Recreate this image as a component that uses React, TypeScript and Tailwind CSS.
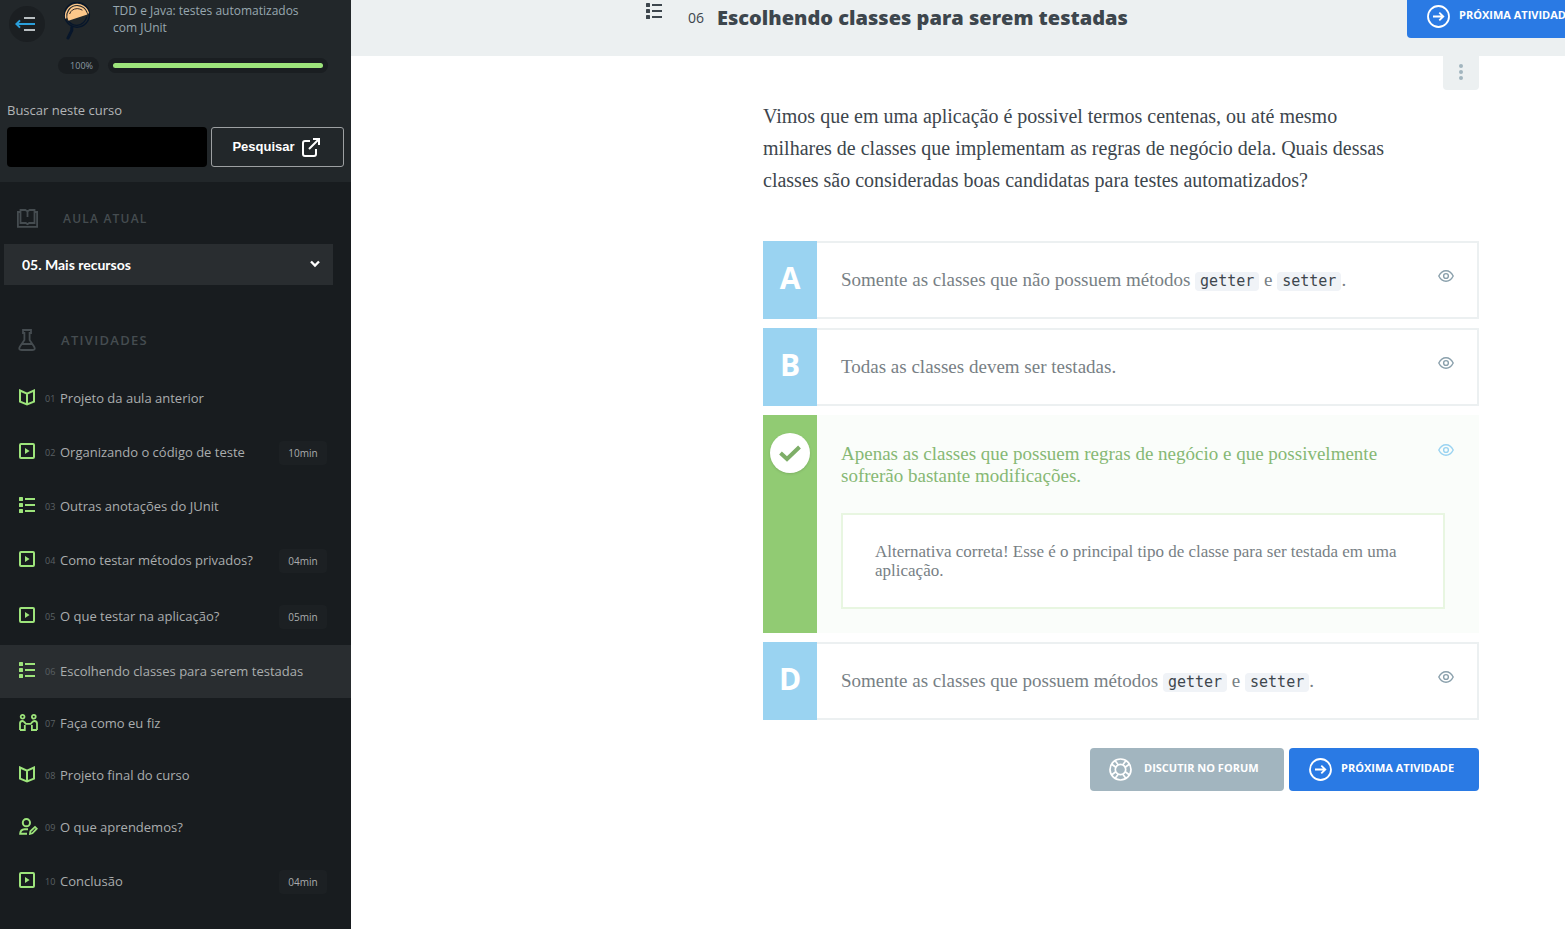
import { useState } from 'react'

type Kind = 'book' | 'video' | 'list' | 'pair' | 'review'

interface Activity {
  n: string
  title: string
  kind: Kind
  time?: string
}

const ACTIVITIES: Activity[] = [
  { n: '01', title: 'Projeto da aula anterior', kind: 'book' },
  { n: '02', title: 'Organizando o código de teste', kind: 'video', time: '10min' },
  { n: '03', title: 'Outras anotações do JUnit', kind: 'list' },
  { n: '04', title: 'Como testar métodos privados?', kind: 'video', time: '04min' },
  { n: '05', title: 'O que testar na aplicação?', kind: 'video', time: '05min' },
  { n: '06', title: 'Escolhendo classes para serem testadas', kind: 'list' },
  { n: '07', title: 'Faça como eu fiz', kind: 'pair' },
  { n: '08', title: 'Projeto final do curso', kind: 'book' },
  { n: '09', title: 'O que aprendemos?', kind: 'review' },
  { n: '10', title: 'Conclusão', kind: 'video', time: '04min' },
]

const CURRENT = '06'

function rowStyle(a: Activity) {
  if (a.n === CURRENT) return 'h-[53px] bg-[#292d30]'
  return a.time ? 'h-14' : 'h-[52px]'
}

function ListIcon() {
  return (
    <svg width="16" height="16" viewBox="0 0 16 16" fill="currentColor">
      <rect x="0" y="0" width="4" height="4" rx="0.6" />
      <rect x="0" y="6" width="4" height="4" rx="0.6" />
      <rect x="0" y="12" width="4" height="4" rx="0.6" />
      <path d="M6 1h10v2H6zM6 7h10v2H6zM6 13h10v2H6z" />
    </svg>
  )
}

const KIND_ICON: Record<Kind, React.ReactNode> = {
  book: (
    <svg width="16" height="17" viewBox="0 0 16 17" fill="none" stroke="currentColor" strokeWidth="2">
      <path d="M1 1.5 8 4.6 15 1.5V12.6L8 15.5 1 12.6ZM8 4.6V15.5" />
    </svg>
  ),
  video: (
    <svg width="16" height="16" viewBox="0 0 16 16">
      <rect x="1" y="1" width="14" height="14" rx="1" fill="none" stroke="currentColor" strokeWidth="2" />
      <path d="M6 5v6l4.6-3z" fill="currentColor" />
    </svg>
  ),
  list: <ListIcon />,
  pair: (
    <svg width="19" height="17" viewBox="0 0 19 17" fill="none" stroke="currentColor" strokeWidth="1.8">
      <circle cx="3.6" cy="2.8" r="1.9" />
      <circle cx="14.8" cy="2.8" r="1.9" />
      <path d="M1 16V9.6Q1 7 3.4 7 4.6 7 5.4 8.2L6.8 9.8H9.3M1 16H5.8V11M18 16V9.6Q18 7 15.4 7 14.2 7 13.2 8.2L11.8 9.8H9.3M18 16H12.9V11" />
    </svg>
  ),
  review: (
    <svg width="19" height="17" viewBox="0 0 19 17" fill="none" stroke="currentColor" strokeWidth="2">
      <circle cx="7.4" cy="4.7" r="3.6" />
      <path d="M9 11.2H5.6Q1.4 11.4 1.2 15.7H8" />
      <path d="M11 15.9 11.4 13.3 16 8.9 17.8 10.7 13.4 15.3Z" strokeWidth="1.8" />
    </svg>
  ),
}

function EyeIcon() {
  return (
    <svg width="16" height="12" viewBox="0 0 16 12" fill="none" stroke="currentColor" strokeWidth="1.4">
      <path d="M.8 6Q3.4.8 8 .8T15.2 6Q12.6 11.2 8 11.2T.8 6Z" />
      <circle cx="8" cy="6" r="2.4" />
    </svg>
  )
}

function ArrowCircle() {
  return (
    <svg width="23" height="23" viewBox="0 0 23 23" fill="none" stroke="currentColor" strokeWidth="1.8" className="shrink-0">
      <circle cx="11.5" cy="11.5" r="10.5" />
      <path d="M6 11.5H16.2M12.3 7.6 16.3 11.5 12.3 15.4" />
    </svg>
  )
}

function NextButton() {
  return (
    <a href="#proxima"
      className="flex h-[43px] w-[190px] shrink-0 items-center gap-[9px] whitespace-nowrap rounded bg-[#2a7ae4] pl-5 text-[11px] font-bold text-white">
      <ArrowCircle />
      <span className="pb-0.5">PRÓXIMA ATIVIDADE</span>
    </a>
  )
}

function Code({ children }: { children: React.ReactNode }) {
  return (
    <code className="rounded bg-[#f0f3f7] px-[5px] pb-px font-['DejaVu_Sans_Mono',monospace] text-[15px] leading-none text-[#3d464d]">
      {children}
    </code>
  )
}

function Alternative({ letter, children }: { letter: string; children: React.ReactNode }) {
  return (
    <li className="flex">
      <div className="flex w-[54px] shrink-0 items-center justify-center bg-[#9ad3f1] pb-1 text-3xl font-bold text-white">
        {letter}
      </div>
      <div className="flex flex-1 justify-between border-2 border-l-0 border-[#ecf0f1] py-[26px] pl-6 pr-[23px]">
        <p className="font-['Liberation_Serif',serif] text-[19px] leading-[22px] text-[#787f85]">{children}</p>
        <button aria-label="Ver opinião do instrutor" className="flex h-3.5 shrink-0 items-center self-start text-[#8aa0ac]">
          <EyeIcon />
        </button>
      </div>
    </li>
  )
}

function Sidebar() {
  const [lesson, setLesson] = useState('05')

  return (
    <aside className="w-[351px] shrink-0 bg-[#181c1f]">
      <div className="bg-[#22272a] px-[7px] pb-[15px] pt-0.5">
        <div className="flex h-10 items-start pl-0.5">
          <button aria-label="Fechar menu" className="mt-1 flex h-9 w-9 items-center justify-center rounded-full bg-[#1b1f22] pr-1">
            <svg width="20" height="14" viewBox="0 0 20 14" fill="none">
              <path d="M9 1H20M9 13H20" stroke="#b8bec1" strokeWidth="1.9" />
              <path d="M1 7H20M5 3.4 1.4 7 5 10.6" stroke="#2a9fdb" strokeWidth="2" />
            </svg>
          </button>
          <svg width="30" height="38" viewBox="0 0 30 38" className="ml-[17px] shrink-0" fill="none">
            <circle cx="15" cy="12.8" r="12.4" stroke="#07162b" strokeWidth="1.4" />
            <path d="M3.8 16.5A11.6 11.6 0 0 1 26.5 11.5" stroke="#fdc78a" strokeWidth="1.3" />
            <path d="M6.4 18.8A9.6 9.6 0 0 1 5.6 11.5Q8 4.4 15 4 22.6 4.6 24.8 11L25.4 12.4Z" fill="#fdc78a" />
            <path d="M7.6 12Q9.2 7 15.2 6.6 18 6.7 20.4 8.2" stroke="#2b2426" strokeWidth="1" />
            <path d="M6.2 19Q10 23.4 15 23.4 22.6 22.6 24.8 14.6" stroke="#07162b" strokeWidth="1.3" />
            <path d="M9.8 25.5V28.5L6 36" stroke="#07162b" strokeWidth="3" strokeLinecap="round" />
          </svg>
          <p className="ml-[21px] w-[210px] text-[12px] leading-[17px] text-[#98a7b0]">
            TDD e Java: testes automatizados com JUnit
          </p>
        </div>

        <div className="mt-[15px] flex h-[17px] items-center pl-[51px] pr-4">
          <span className="w-[41px] rounded-full bg-[#1a1e21] pr-1.5 text-right text-[9px] leading-[17px] text-[#8b9aa3]">100%</span>
          <div role="progressbar" aria-valuenow={100} className="ml-[9px] flex-1 rounded-full bg-[#1a1e21] p-[5px]">
            <div className="h-[5px] rounded-full bg-[#9de47b]" />
          </div>
        </div>

        <form onSubmit={e => e.preventDefault()}>
          <label htmlFor="busca" className="mt-[26px] block text-[13px] leading-5 text-[#b2b5b7]">Buscar neste curso</label>
          <div className="mt-[7px] flex gap-1">
            <input id="busca" type="text" className="h-10 min-w-0 flex-1 rounded bg-black px-3 text-white" />
            <button type="submit"
              className="flex h-10 w-[133px] items-center justify-center gap-1.5 rounded-[3px] border border-[#9da0a2] pr-0.5 font-['Liberation_Sans',sans-serif] text-[13px] font-bold text-white">
              Pesquisar
              <svg width="20" height="20" viewBox="0 0 20 20" fill="none" stroke="currentColor" strokeWidth="2">
                <path d="M9 4H4Q2 4 2 6V17Q2 19 4 19H13Q15 19 15 17V12M12 2H18V8M18 2 8 12" />
              </svg>
            </button>
          </div>
        </form>
      </div>

      <h2 className="flex items-center gap-[25px] pl-[17px] pt-[26px] text-[12px] font-semibold leading-[21px] tracking-widest text-[#454c50]">
        <svg width="21" height="19" viewBox="0 0 21 19" fill="none" stroke="currentColor" strokeWidth="1.8">
          <path d="M3.5 3H.9V17.8H20.1V3H17.5M3.5 1H8.4L10.5 2.4 12.6 1H17.5V14H12.2L10.5 15.2 8.8 14H3.5ZM10.5 2.4V8" />
        </svg>
        AULA ATUAL
      </h2>
      <div className="relative ml-1 mr-[18px] mt-[15px]">
        <select aria-label="Aula atual" value={lesson} onChange={e => setLesson(e.target.value)}
          className="h-[41px] w-full appearance-none bg-[#292d30] pl-[18px] font-['Lato',sans-serif] text-[14px] font-bold text-white">
          <option value="05">05. Mais recursos</option>
        </select>
        <svg width="10" height="8" viewBox="0 0 10 8" className="pointer-events-none absolute right-[13px] top-4" fill="none" stroke="white" strokeWidth="2.4">
          <path d="M1 1.5 5 5.5 9 1.5" />
        </svg>
      </div>

      <h2 className="mt-11 flex items-center gap-[25px] pl-[18px] text-[13px] font-semibold leading-[22px] tracking-widest text-[#454c50]">
        <svg width="18" height="22" viewBox="0 0 18 22" fill="none" stroke="currentColor" strokeWidth="1.8">
          <path d="M5 1H13V4H11.6V11L16 17.5Q18 21 14.5 21H3.5Q0 21 2 17.5L6.4 11V4H5ZM4 15H14" />
        </svg>
        ATIVIDADES
      </h2>
      <ul className="mt-[22px]">
        {ACTIVITIES.map(a => (
          <li key={a.n}>
            <a href={`#${a.n}`} className={`flex items-center pl-[19px] pr-6 ${rowStyle(a)}`}>
              <span className="w-[26px] pb-1 text-[#9de47b]">{KIND_ICON[a.kind]}</span>
              <span className="w-[15px] text-[9px] text-[#5b6164]">{a.n}</span>
              <span className="flex-1 text-[13px] text-[#aaadae]">{a.title}</span>
              {a.time && (
                <span className="w-12 rounded bg-[#1c2023] text-center text-[10px] leading-6 text-[#aaadae]">{a.time}</span>
              )}
            </a>
          </li>
        ))}
      </ul>
    </aside>
  )
}

export default function App() {
  return (
    <div className="flex min-h-screen bg-white font-['Open_Sans',sans-serif]">
      <Sidebar />

      <main className="min-w-0 flex-1 overflow-hidden">
        <header className="flex h-14 items-start bg-[#ecf0f1] pl-[295px] text-[#3d464d]">
          <span className="mt-[3px]"><ListIcon /></span>
          <h1 className="flex flex-1 items-center whitespace-nowrap pl-[26px] text-[20px] font-extrabold leading-[35px]">
            <span className="w-[29px] text-[14px] font-medium">06</span>
            Escolhendo classes para serem testadas
          </h1>
          <div className="-mr-8 -mt-[5px]"><NextButton /></div>
        </header>

        <div className="ml-auto mr-[86px] max-w-[716px]">
          <div className="flex justify-end">
            <button aria-label="Mais opções" className="flex h-[34px] w-9 items-center justify-center rounded-b bg-[#ecf0f1] pb-0.5 text-[#a2b5bf]">
              <svg width="4" height="16" viewBox="0 0 4 16" fill="currentColor">
                <circle cx="2" cy="2" r="2" />
                <circle cx="2" cy="8" r="2" />
                <circle cx="2" cy="14" r="2" />
              </svg>
            </button>
          </div>

          <p className="mt-2.5 max-w-[640px] font-['Liberation_Serif',serif] text-[20px] leading-8 text-[#3d464d]">
            Vimos que em uma aplicação é possivel termos centenas, ou até mesmo milhares de classes que implementam as
            regras de negócio dela. Quais dessas classes são consideradas boas candidatas para testes automatizados?
          </p>

          <ul className="mt-[45px] space-y-[9px]">
            <Alternative letter="A">
              Somente as classes que não possuem métodos <Code>getter</Code> e <Code>setter</Code>.
            </Alternative>
            <Alternative letter="B">Todas as classes devem ser testadas.</Alternative>
            <li className="flex">
              <div className="w-[54px] shrink-0 bg-[#91cb73] px-[7px] pt-[18px]">
                <div className="flex h-10 w-10 items-center justify-center rounded-full bg-white shadow">
                  <svg width="22" height="17" viewBox="0 0 22 17" fill="none" stroke="#7eae68" strokeWidth="4">
                    <path d="M1.5 8 8 14 20.5 2" />
                  </svg>
                </div>
              </div>
              <div className="flex-1 bg-[#fafdfa] pb-6 pl-6 pr-[25px] pt-7">
                <div className="flex justify-between">
                  <p className="w-[560px] font-['Liberation_Serif',serif] text-[19px] leading-[22px] text-[#86b874]">
                    Apenas as classes que possuem regras de negócio e que possivelmente sofrerão bastante modificações.
                  </p>
                  <button aria-label="Ver opinião do instrutor" className="flex h-3.5 items-center text-[#9ad3f1]">
                    <EyeIcon />
                  </button>
                </div>
                <div className="mr-[9px] mt-[26px] border-2 border-[#e8f6e1] bg-white px-8 py-[27px]">
                  <p className="font-['Liberation_Serif',serif] text-[17px] leading-[19px] text-[#787f85]">
                    Alternativa correta! Esse é o principal tipo de classe para ser testada em uma aplicação.
                  </p>
                </div>
              </div>
            </li>
            <Alternative letter="D">
              Somente as classes que possuem métodos <Code>getter</Code> e <Code>setter</Code>.
            </Alternative>
          </ul>

          <div className="mt-7 flex justify-end gap-[5px]">
            <a href="#forum"
              className="flex h-[43px] w-[194px] items-center gap-3 whitespace-nowrap rounded bg-[#a2b5bf] pl-[19px] text-[11px] font-bold text-white">
              <svg width="23" height="23" viewBox="0 0 23 23" fill="none" stroke="currentColor" strokeWidth="1.7" className="shrink-0">
                <circle cx="11.5" cy="11.5" r="10.5" />
                <circle cx="11.5" cy="11.5" r="5.2" />
                <path d="M6.2 2.8 9.2 6.8M2.8 6.2 6.8 9.2M16.8 2.8 13.8 6.8M20.2 6.2 16.2 9.2M6.2 20.2 9.2 16.2M2.8 16.8 6.8 13.8M16.8 20.2 13.8 16.2M20.2 16.8 16.2 13.8" />
              </svg>
              <span className="pb-0.5">DISCUTIR NO FORUM</span>
            </a>
            <NextButton />
          </div>
        </div>
      </main>
    </div>
  )
}
